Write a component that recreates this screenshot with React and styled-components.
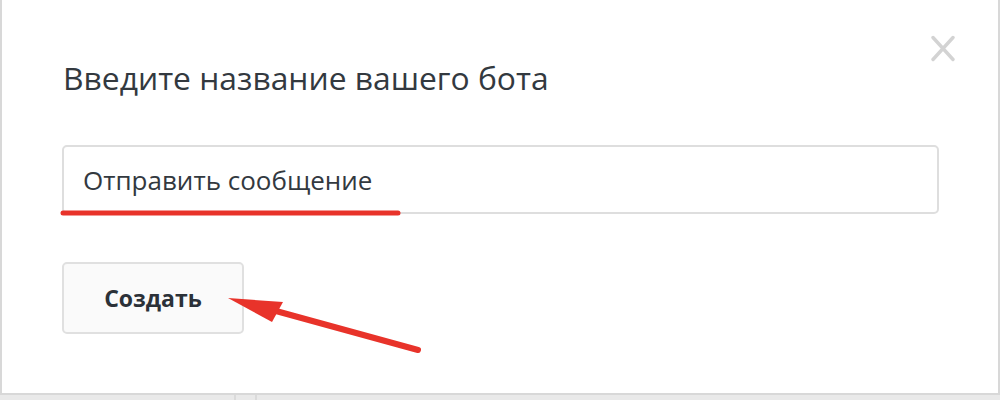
import styled, { createGlobalStyle } from "styled-components"

const Global = createGlobalStyle`
    html, body { margin: 0; padding: 0; }
    body {
        background: #e9e9e9;
        font-family: "Open Sans", "Noto Sans", sans-serif;
        width: 1000px;
        height: 400px;
        overflow: hidden;
    }
`

const Modal = styled.div`
    position: relative;
    box-sizing: border-box;
    width: 1000px;
    height: 395px;
    background: #fff;
    border: 2px solid #d8d8d8;
    border-top: none;
    padding: 56px 60px 0 60px;
    display: flex;
    flex-direction: column;
    align-items: flex-start;
`

const Title = styled.h2`
    margin: 0 0 0 1px;
    font-size: 31.8px;
    line-height: 44px;
    font-weight: 400;
    color: #33393f;
`

const Field = styled.div`
    box-sizing: border-box;
    margin-top: 45px;
    width: 877px;
    height: 69px;
    border: 2px solid #dedede;
    border-radius: 5px;
    display: flex;
    align-items: center;
    padding-left: 19px;
    font-size: 26px;
    color: #33393f;
`

const Button = styled.button`
    box-sizing: border-box;
    margin-top: 48px;
    width: 182px;
    height: 72px;
    background: #fafafa;
    border: 2px solid #e0e0e0;
    border-radius: 5px;
    font-family: inherit;
    font-size: 23px;
    font-weight: 700;
    color: #2b3138;
    cursor: pointer;
`

const Close = styled.button`
    position: absolute;
    top: 35px;
    right: 43px;
    width: 24px;
    height: 27px;
    padding: 0;
    border: none;
    background: none;
    cursor: pointer;
`

const Notes = styled.svg`
    position: absolute;
    left: -2px;
    top: 0;
    pointer-events: none;
`

const Bottom = styled.div`
    height: 5px;
    display: flex;
`

const Pane = styled.div`
    width: ${p => p.w}px;
    border-right: 2px solid #dadada;
`

export default function App() {
    return (
        <>
            <Global />
            <Modal>
                <Title>Введите название вашего бота</Title>
                <Field>Отправить сообщение</Field>
                <Button>Создать</Button>
                <Close aria-label="Закрыть">
                    <svg width="24" height="27" viewBox="0 0 24 27">
                        <path d="M2 2.5 L22 24.5 M22 2.5 L2 24.5" stroke="#d3d3d3" strokeWidth="3.4" strokeLinecap="round" />
                    </svg>
                </Close>
                <Notes width="1000" height="395" viewBox="0 0 1000 395">
                    <line x1="63" y1="213" x2="398" y2="213" stroke="#e8332a" strokeWidth="5" strokeLinecap="round" />
                    <line x1="276" y1="311" x2="418" y2="350" stroke="#e8332a" strokeWidth="6" strokeLinecap="round" />
                    <polygon points="228,298 283,302 272,322" fill="#e8332a" />
                </Notes>
            </Modal>
            <Bottom>
                <Pane w={234} />
                <Pane w={19} />
            </Bottom>
        </>
    )
}
